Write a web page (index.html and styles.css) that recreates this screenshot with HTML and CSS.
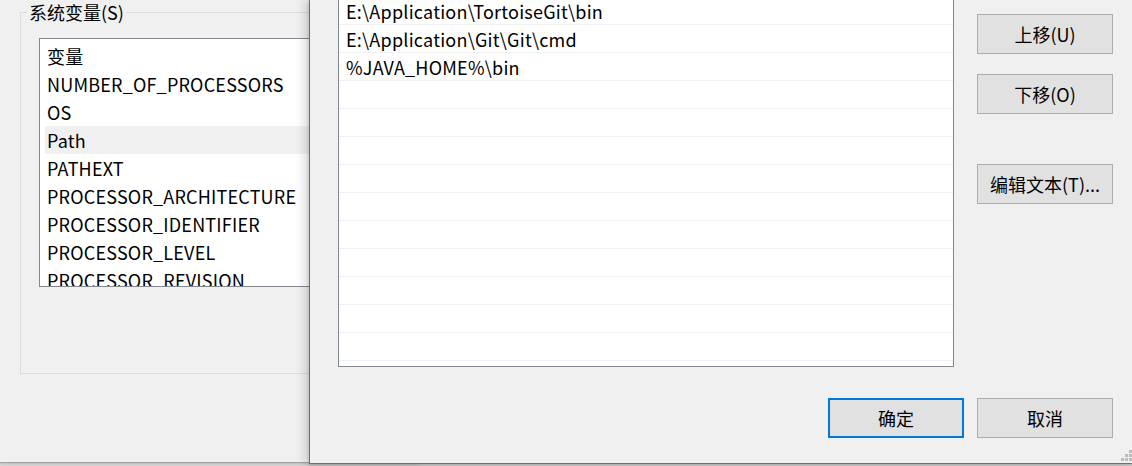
FILE: index.html
```html
<!DOCTYPE html>
<html lang="zh-CN">
<head>
<meta charset="utf-8">
<title>编辑环境变量</title>
<link rel="stylesheet" href="styles.css">
</head>
<body>
<div class="desktop">
  <div class="env-window">
    <div class="group">
      <span class="group-label">系统变量(S)</span>
      <div class="varlist">
        <div class="var-row">变量</div>
        <div class="var-row">NUMBER_OF_PROCESSORS</div>
        <div class="var-row">OS</div>
        <div class="var-row selected">Path</div>
        <div class="var-row">PATHEXT</div>
        <div class="var-row">PROCESSOR_ARCHITECTURE</div>
        <div class="var-row">PROCESSOR_IDENTIFIER</div>
        <div class="var-row">PROCESSOR_LEVEL</div>
        <div class="var-row">PROCESSOR_REVISION</div>
      </div>
    </div>
  </div>

  <div class="dialog">
    <div class="dialog-body">
      <div class="pathlist">
        <div class="path-row">E:\Application\TortoiseGit\bin</div>
        <div class="path-row">E:\Application\Git\Git\cmd</div>
        <div class="path-row">%JAVA_HOME%\bin</div>
        <div class="path-row"></div>
        <div class="path-row"></div>
        <div class="path-row"></div>
        <div class="path-row"></div>
        <div class="path-row"></div>
        <div class="path-row"></div>
        <div class="path-row"></div>
        <div class="path-row"></div>
        <div class="path-row"></div>
        <div class="path-row"></div>
      </div>
      <div class="side-buttons">
        <button class="btn btn-up">上移(U)</button>
        <button class="btn btn-down">下移(O)</button>
        <button class="btn btn-edit">编辑文本(T)...</button>
      </div>
    </div>
    <div class="dialog-footer">
      <button class="btn btn-default">确定</button>
      <button class="btn">取消</button>
    </div>
    <svg class="grip" width="12" height="12" viewBox="0 0 12 12">
      <rect x="8" y="0" width="3" height="3"/>
      <rect x="4" y="4" width="3" height="3"/>
      <rect x="8" y="4" width="3" height="3"/>
      <rect x="0" y="8" width="3" height="3"/>
      <rect x="4" y="8" width="3" height="3"/>
      <rect x="8" y="8" width="3" height="3"/>
    </svg>
  </div>
</div>
</body>
</html>
```

FILE: styles.css
```css
* { box-sizing: border-box; }

html, body {
  margin: 0;
  padding: 0;
  width: 1132px;
  height: 466px;
  overflow: hidden;
}

body {
  background: #dcdcdc;
  font-family: "Noto Sans CJK SC", "Noto Sans", sans-serif;
  font-size: 18px;
  color: #000;
}

.desktop {
  position: relative;
  width: 1132px;
  height: 466px;
  overflow: hidden;
}

/* back window */
.env-window {
  position: absolute;
  left: 0;
  top: 0;
  width: 420px;
  height: 463px;
  background: #f0f0f0;
  border-bottom: 1px solid #a3a3a3;
  box-shadow: 0 1px 3px rgba(0, 0, 0, 0.18);
  padding: 12px 0 0 20px;
}

.group {
  position: relative;
  width: 380px;
  height: 362px;
  border: 1px solid #dcdcdc;
  padding: 25px 0 0 18px;
}

.group-label {
  position: absolute;
  left: 6px;
  top: -13px;
  padding: 0 2px;
  background: #f0f0f0;
  line-height: 24px;
  white-space: nowrap;
}

.varlist {
  width: 300px;
  height: 249px;
  background: #fff;
  border: 1px solid #828790;
  padding: 3px 0 0 5px;
  overflow: hidden;
}

.var-row {
  height: 28px;
  line-height: 28px;
  padding-left: 2px;
  white-space: nowrap;
  letter-spacing: 0.2px;
}

.var-row.selected {
  background: #f0f0f0;
}

/* front dialog */
.dialog {
  position: absolute;
  left: 309px;
  top: 0;
  width: 826px;
  height: 464px;
  background: #f0f0f0;
  border-left: 1px solid #6f6f6f;
  border-bottom: 1px solid #6f6f6f;
  box-shadow: -4px 0 10px rgba(0, 0, 0, 0.16), 0 1px 3px rgba(0, 0, 0, 0.2);
  padding-left: 28px;
}

.dialog-body {
  display: flex;
  gap: 23px;
}

.pathlist {
  margin-top: -4px;
  width: 616px;
  height: 371px;
  background: #fff;
  border: 1px solid #828790;
  overflow: hidden;
}

.path-row {
  height: 28px;
  line-height: 29px;
  padding-left: 7px;
  border-bottom: 1px solid #f0f0f0;
  white-space: nowrap;
  letter-spacing: 0.23px;
}

.side-buttons {
  display: flex;
  flex-direction: column;
  padding-top: 14px;
}

.btn {
  width: 136px;
  height: 40px;
  margin: 0;
  padding: 0;
  background: #e1e1e1;
  border: 1px solid #adadad;
  font-family: "Noto Sans CJK SC", "Noto Sans", sans-serif;
  font-size: 18px;
  color: #000;
}

.btn-down { margin-top: 20px; }
.btn-edit { margin-top: 50px; }

.btn-default {
  border: 2px solid #0078d7;
}

.dialog-footer {
  display: flex;
  gap: 13px;
  margin-top: 31px;
  padding-left: 490px;
}

.grip {
  position: absolute;
  left: 811px;
  top: 450px;
  fill: #bcbcbc;
}
```
